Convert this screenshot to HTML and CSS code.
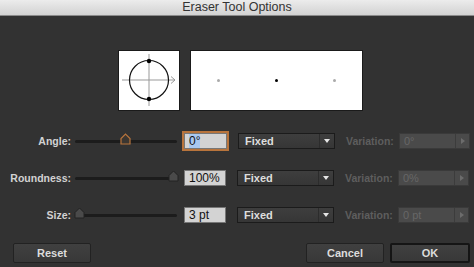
FILE: index.html
```html
<!DOCTYPE html>
<html lang="en">
<head>
    <meta charset="UTF-8">
    <title>Eraser Tool Options</title>
    <link rel="stylesheet" href="styles.css">
</head>
<body>
    <div class="dialog">
        <div class="titlebar">Eraser Tool Options</div>

        <div class="preview">
            <div class="preview-box preview-small">
                <svg width="62" height="61" viewBox="0 0 62 61">
                    <line x1="4" y1="30" x2="57" y2="30" stroke="#999" stroke-width="1"/>
                    <polyline points="53,26.5 57,30 53,33.5" fill="none" stroke="#999" stroke-width="1"/>
                    <line x1="31" y1="4" x2="31" y2="56" stroke="#999" stroke-width="1"/>
                    <circle cx="31" cy="30" r="19.5" fill="none" stroke="#111" stroke-width="1.2"/>
                    <circle cx="31" cy="11" r="2.2" fill="#000"/>
                    <circle cx="31" cy="49" r="2.2" fill="#000"/>
                </svg>
            </div>
            <div class="preview-box preview-wide">
                <span class="dot dot-light"></span>
                <span class="dot"></span>
                <span class="dot dot-light"></span>
            </div>
        </div>

        <div class="rows">
            <div class="row">
                <label class="label">Angle:</label>
                <div class="slider">
                    <svg class="thumb thumb-active" style="left: 45px" width="11" height="12" viewBox="0 0 11 12">
                        <polygon points="1,11 1,5.5 5.5,1 10,5.5 10,11" fill="#3b3631" stroke="#b8743c" stroke-width="1.2"/>
                    </svg>
                </div>
                <div class="field field-focus"><span class="selected">0°</span></div>
                <div class="select">Fixed<span class="caret"></span></div>
                <span class="var-label">Variation:</span>
                <div class="var-field">0°<span class="var-step"></span></div>
            </div>
            <div class="row">
                <label class="label">Roundness:</label>
                <div class="slider">
                    <svg class="thumb" style="left: 93px" width="11" height="12" viewBox="0 0 11 12">
                        <polygon points="1,11 1,5.5 5.5,1 10,5.5 10,11" fill="#4a4a4a" stroke="#222" stroke-width="1"/>
                    </svg>
                </div>
                <div class="field">100%</div>
                <div class="select">Fixed<span class="caret"></span></div>
                <span class="var-label">Variation:</span>
                <div class="var-field">0%<span class="var-step"></span></div>
            </div>
            <div class="row">
                <label class="label">Size:</label>
                <div class="slider">
                    <svg class="thumb" style="left: -1px" width="11" height="12" viewBox="0 0 11 12">
                        <polygon points="1,11 1,5.5 5.5,1 10,5.5 10,11" fill="#4a4a4a" stroke="#222" stroke-width="1"/>
                    </svg>
                </div>
                <div class="field">3 pt</div>
                <div class="select">Fixed<span class="caret"></span></div>
                <span class="var-label">Variation:</span>
                <div class="var-field">0 pt<span class="var-step"></span></div>
            </div>
        </div>

        <div class="buttons">
            <button class="btn">Reset</button>
            <div class="spacer"></div>
            <button class="btn">Cancel</button>
            <button class="btn btn-default">OK</button>
        </div>
    </div>
</body>
</html>
```

FILE: styles.css
```css
* {
    box-sizing: border-box;
    font-family: "Liberation Sans", Arial, sans-serif;
}
body {
    margin: 0;
    background: #323232;
}
.dialog {
    width: 474px;
    height: 267px;
    background: #323232;
    overflow: hidden;
}
.titlebar {
    height: 16px;
    background: linear-gradient(#ececec, #d2d2d2);
    border-bottom: 1px solid #8a8a8a;
    color: #333;
    font-size: 12.5px;
    line-height: 15px;
    text-align: center;
}
.preview {
    display: flex;
    gap: 10px;
    margin-top: 34px;
    padding-left: 118px;
}
.preview-box {
    height: 61px;
    background: #fff;
    border: 1px solid #1a1a1a;
}
.preview-small {
    width: 62px;
}
.preview-small svg {
    display: block;
    margin: -1px;
}
.preview-wide {
    width: 173px;
    display: flex;
    align-items: center;
    justify-content: space-between;
    padding: 0 26px 0 26px;
}
.dot {
    width: 3px;
    height: 3px;
    border-radius: 50%;
    background: #000;
}
.dot-light {
    background: #aaa;
}
.rows {
    margin-top: 22px;
    display: flex;
    flex-direction: column;
    gap: 21px;
}
.row {
    display: flex;
    align-items: center;
    height: 16px;
}
.label {
    width: 71px;
    text-align: right;
    color: #d2d2d2;
    font-size: 10.5px;
    font-weight: bold;
}
.slider {
    position: relative;
    width: 102px;
    height: 3px;
    margin-left: 4px;
    background: #1c1c1c;
    border-radius: 2px;
}
.thumb {
    position: absolute;
    top: -7px;
}
.field {
    width: 42px;
    height: 16px;
    margin-left: 7px;
    background: #d3d3d3;
    border: 1px solid #777;
    color: #111;
    font-size: 12px;
    line-height: 14px;
    padding-left: 4px;
}
.field-focus {
    outline: 2px solid #b8743c;
    outline-offset: 0;
    width: 43px;
}
.selected {
    background: #a9c8f0;
}
.select {
    position: relative;
    width: 97px;
    height: 16px;
    margin-left: 11px;
    background: linear-gradient(#3e3e3e, #363636);
    border: 1px solid #1b1b1b;
    color: #dedede;
    font-size: 11px;
    font-weight: bold;
    line-height: 14px;
    padding-left: 6px;
}
.caret {
    position: absolute;
    right: 0;
    top: 0;
    width: 15px;
    height: 14px;
    border-left: 1px solid #2c2c2c;
}
.caret::after {
    content: "";
    position: absolute;
    left: 4px;
    top: 5px;
    border-left: 3px solid transparent;
    border-right: 3px solid transparent;
    border-top: 4px solid #e6e6e6;
}
.var-label {
    width: 48px;
    margin-left: 11px;
    color: #5e5e5e;
    font-size: 10.5px;
    font-weight: bold;
}
.var-field {
    position: relative;
    width: 71px;
    height: 16px;
    margin-left: 5px;
    background: #4a4a4a;
    border: 1px solid #3a3a3a;
    color: #676767;
    font-size: 11px;
    line-height: 14px;
    padding-left: 4px;
}
.var-step {
    position: absolute;
    right: 0;
    top: 0;
    width: 14px;
    height: 14px;
    border-left: 1px solid #3c3c3c;
}
.var-step::after {
    content: "";
    position: absolute;
    left: 5px;
    top: 4px;
    border-top: 3px solid transparent;
    border-bottom: 3px solid transparent;
    border-left: 4px solid #6c6c6c;
}
.buttons {
    display: flex;
    gap: 6px;
    margin-top: 20px;
    padding: 0 4px 0 13px;
}
.spacer {
    flex: 1;
}
.btn {
    width: 78px;
    height: 20px;
    background: linear-gradient(#404040, #383838);
    border: 1px solid #222;
    border-radius: 2px;
    color: #dcdcdc;
    font-size: 11px;
    font-weight: bold;
    padding: 0;
}
.btn-default {
    width: 80px;
    border: 2px solid #151515;
}
```
